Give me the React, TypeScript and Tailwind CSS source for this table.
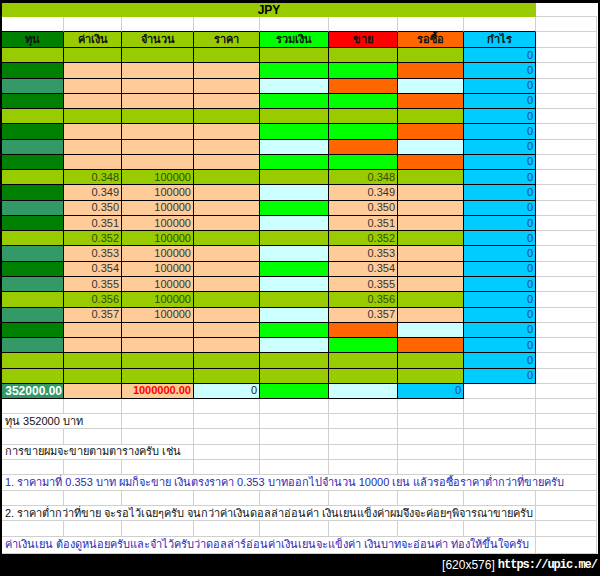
import React from "react";

const colW = ["w-[62px]", "w-[58px]", "w-[72px]", "w-[66px]", "w-[69px]", "w-[69px]", "w-[66px]", "w-[72px]", "w-[61px]"];

const fill: Record<string, string> = {
  L: "bg-[#99cc00]",
  D: "bg-[#008000]",
  T: "bg-[#339966]",
  P: "bg-[#ffcc99]",
  G: "bg-[#00ff00]",
  C: "bg-[#ccffff]",
  O: "bg-[#ff6600]",
  B: "bg-[#00ccff]",
  R: "bg-[#ff0000]",
  W: "bg-white",
};

// one letter per column (ทุน .. กำไร), col 9 is always blank sheet
const rows = [
  "LLLLLLLB", "DPPPGGOB", "TPPPCOCB", "DPPPGGOB", "LLLLLLLB", "DPPPGGOB",
  "TPPPCOCB", "DPPPGGOB", "LLLLLLLB", "DPPPCPPB", "TPPPGPPB", "DPPPCPPB",
  "LLLLLLLB", "TPPPCPPB", "DPPPGPPB", "TPPPCPPB", "LLLLLLLB", "TPPPCPPB",
  "DPPPGOCB", "TPPPCGOB", "LLLLLLLB", "LLLLLLLB",
];

const headers = [
  { t: "ทุน", c: "D" },
  { t: "ค่าเงิน", c: "L" },
  { t: "จำนวน", c: "L" },
  { t: "ราคา", c: "L" },
  { t: "รวมเงิน", c: "G" },
  { t: "ขาย", c: "R" },
  { t: "รอซื้อ", c: "O" },
  { t: "กำไร", c: "B" },
];

const notes = [
  { t: "", span: 0, blue: false },
  { t: "ทุน 352000 บาท", span: 2, blue: false },
  { t: "", span: 0, blue: false },
  { t: "การขายผมจะขายตามตารางครับ เช่น", span: 3, blue: false },
  { t: "", span: 0, blue: false },
  { t: "1. ราคามาที่ 0.353 บาท ผมก็จะขาย เงินตรงราคา 0.353 บาทออกไปจำนวน 10000 เยน แล้วรอซื้อราคาต่ำกว่าที่ขายครับ", span: 9, blue: true },
  { t: "", span: 0, blue: false },
  { t: "2. ราคาต่ำกว่าที่ขาย จะรอไว้เฉยๆครับ จนกว่าค่าเงินดอลล่าอ่อนค่า เงินเยนแข็งค่าผมจึงจะค่อยๆพิจารณาขายครับ", span: 8, blue: false },
  { t: "", span: 0, blue: false },
  { t: "ค่าเงินเยน ต้องดูหน่อยครับและจำไว้ครับว่าดอลล่าร์อ่อนค่าเงินเยนจะแข็งค่า  เงินบาทจะอ่อนค่า ท่องให้ขึ้นใจครับ", span: 8, blue: true },
];

const spanW = ["", "w-[62px]", "w-[120px]", "w-[192px]", "w-[258px]", "w-[327px]", "w-[396px]", "w-[462px]", "w-[534px]", "w-[595px]"];

const font = "font-['Tahoma','Liberation_Sans','Noto_Sans',sans-serif]";

export default function App() {
  return (
    <div className={`w-[600px] h-[576px] bg-black flex flex-col ${font}`}>
      <div className="ml-[2px] mt-[3px] w-[596px] bg-white flex flex-col">
        {/* title */}
        <div className="flex h-[14px]">
          <div className="w-[534px] bg-[#99cc00] flex items-center justify-center text-[12px] font-bold text-black leading-none">JPY</div>
          <div className="w-[61px] border-b border-[#d0d0d0]" />
        </div>
        {/* blank row under title */}
        <div className="flex h-[15px]">
          {colW.map((w, i) => (
            <div key={i} className={`${w} h-full border-r border-b ${i < 8 ? "border-b-black" : "border-b-[#d0d0d0]"} border-r-[#d0d0d0]`} />
          ))}
        </div>
        {/* header */}
        <div className="flex h-[16px]">
          {headers.map((h, i) => (
            <div key={i} className={`${colW[i]} h-full ${fill[h.c]} border-r border-b border-black flex items-center justify-center text-[11px] font-bold text-[#111] leading-none`}>
              {h.t}
            </div>
          ))}
          <div className={`${colW[8]} h-full border-r border-b border-[#d0d0d0]`} />
        </div>
        {/* data rows */}
        {rows.map((r, ri) => {
          const hasVal = ri >= 8 && ri <= 17;
          const price = (0.348 + (ri - 8) * 0.001).toFixed(3);
          const numCol = r[1] === "L" ? "text-[#2f4f00]" : "text-[#333]";
          return (
            <div key={ri} className="flex h-[15.27px]">
              {r.split("").map((c, ci) => {
                let txt = "";
                if (hasVal && (ci === 1 || ci === 5)) txt = price;
                if (hasVal && ci === 2) txt = "100000";
                if (ci === 7) txt = "0";
                return (
                  <div
                    key={ci}
                    className={`${colW[ci]} h-full ${fill[c]} border-r border-b border-black flex items-center justify-end pr-[2px] text-[11px] leading-none font-['Liberation_Sans',sans-serif] ${ci === 7 ? "text-[#1c4a8c]" : numCol}`}
                  >
                    {txt}
                  </div>
                );
              })}
              <div className={`${colW[8]} h-full border-r border-b border-[#d0d0d0]`} />
            </div>
          );
        })}
        {/* totals */}
        <div className="flex h-[15px] text-[11px] leading-none font-['Liberation_Sans',sans-serif]">
          <div className={`${colW[0]} h-full ${fill.T} border-r border-b border-black flex items-center justify-end pr-[1px] text-[12px] font-bold text-white`}>352000.00</div>
          <div className={`${colW[1]} h-full ${fill.P} border-r border-b border-black`} />
          <div className={`${colW[2]} h-full ${fill.P} border-r border-b border-black flex items-center justify-end pr-[2px] font-bold text-[#ff0000]`}>1000000.00</div>
          <div className={`${colW[3]} h-full ${fill.C} border-r border-b border-black flex items-center justify-end pr-[2px] text-[#222]`}>0</div>
          <div className={`${colW[4]} h-full ${fill.G} border-r border-b border-black`} />
          <div className={`${colW[5]} h-full ${fill.C} border-r border-b border-black`} />
          <div className={`${colW[6]} h-full ${fill.B} border-r border-b border-black flex items-center justify-end pr-[2px] text-[#1c4a8c]`}>0</div>
          <div className={`${colW[7]} h-full border-r border-b border-[#d0d0d0]`} />
          <div className={`${colW[8]} h-full border-r border-b border-[#d0d0d0]`} />
        </div>
        {/* notes below the table */}
        {notes.map((n, ni) => (
          <div key={ni} className={`flex ${ni === notes.length - 1 ? "h-[17px]" : "h-[15.3px]"}`}>
            {n.span > 0 && (
              <div className={`${spanW[n.span]} h-full border-r border-b border-[#d0d0d0] flex items-center pl-[3px] text-[11px] leading-none whitespace-nowrap overflow-hidden ${n.blue ? "text-[#2a2ab8]" : "text-[#111]"}`}>
                {n.t}
              </div>
            )}
            {colW.slice(n.span).map((w, i) => (
              <div key={i} className={`${w} h-full border-r border-b border-[#d0d0d0]`} />
            ))}
          </div>
        ))}
      </div>
      <div className="flex-1 flex items-center justify-end pr-[3px] text-white text-[12px] leading-none">
        <span className="font-['Liberation_Sans',sans-serif]">[620x576]</span>
        <span className="ml-[3px] font-['Liberation_Mono',monospace] font-bold tracking-[-1px]">https://upic.me/</span>
      </div>
    </div>
  );
}
